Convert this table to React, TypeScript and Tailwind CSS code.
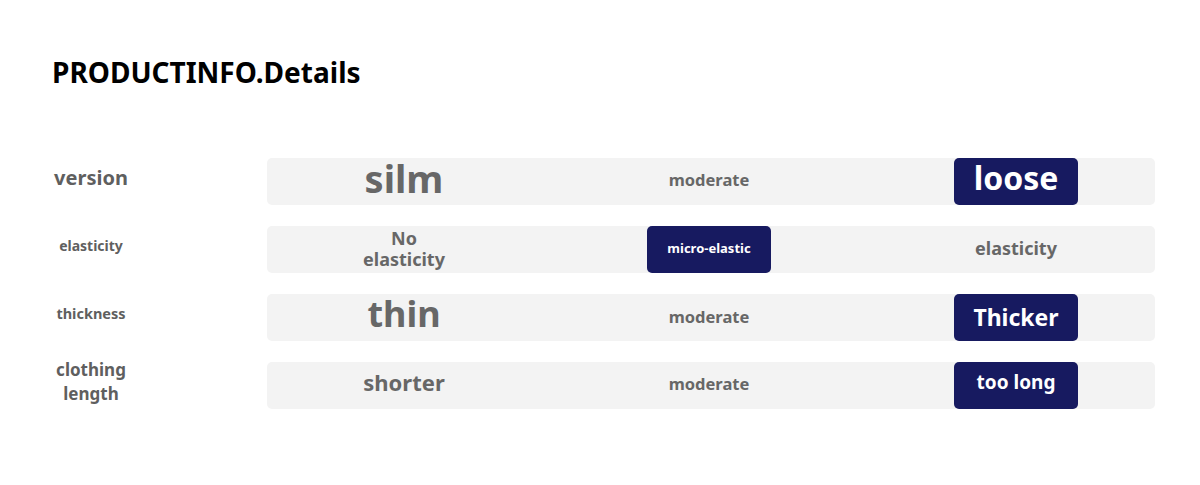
import React from "react";

type Cell = { text: React.ReactNode; cls: string; active?: boolean };
type Row = { label: React.ReactNode; labelCls: string; cells: [Cell, Cell, Cell] };

const rows: Row[] = [
  {
    label: "version",
    labelCls: "text-[20px]",
    cells: [
      { text: "silm", cls: "text-[38px] leading-none pb-[7px]" },
      { text: "moderate", cls: "text-[16.5px] pb-[2px]" },
      { text: "loose", cls: "text-[32px] leading-none pb-[7px]", active: true },
    ],
  },
  {
    label: "elasticity",
    labelCls: "text-[14px]",
    cells: [
      {
        text: (
          <>
            No
            <br />
            elasticity
          </>
        ),
        cls: "text-[18px] leading-[21px] pb-[2px]",
      },
      { text: "micro-elastic", cls: "text-[13px] pb-[2px]", active: true },
      { text: "elasticity", cls: "text-[18px] pb-[3px]" },
    ],
  },
  {
    label: "thickness",
    labelCls: "text-[14.5px]",
    cells: [
      { text: "thin", cls: "text-[36px] leading-none pb-[7px]" },
      { text: "moderate", cls: "text-[16.5px]" },
      { text: "Thicker", cls: "text-[23px] pb-[1px]", active: true },
    ],
  },
  {
    label: (
      <>
        clothing
        <br />
        length
      </>
    ),
    labelCls: "text-[17px] leading-[24px]",
    cells: [
      { text: "shorter", cls: "text-[22px] pb-[6px]" },
      { text: "moderate", cls: "text-[16.5px] pb-[2px]" },
      { text: "too long", cls: "text-[19px] pb-[6px]", active: true },
    ],
  },
];

function CellView({ c }: { c: Cell }) {
  if (c.active) {
    return (
      <div className="flex h-full items-center justify-center">
        <div className="flex h-full w-[124px] items-center justify-center rounded-[5px] bg-[#171a60]">
          <span className={`font-bold text-white ${c.cls}`}>{c.text}</span>
        </div>
      </div>
    );
  }
  return (
    <div className="flex h-full items-center justify-center">
      <span className={`text-center font-bold text-[#676767] ${c.cls}`}>{c.text}</span>
    </div>
  );
}

export default function App() {
  return (
    <div
      className="h-[485px] w-[1200px] bg-white pt-[54px]"
      style={{ fontFamily: '"Noto Sans", "Noto Sans CJK SC", sans-serif' }}
    >
      <div className="pl-[52px]">
        <h1 className="text-[28px] font-bold leading-[36px] text-black">PRODUCTINFO.Details</h1>
      </div>
      <div className="mt-[68px] flex flex-col gap-[21px] pl-[48px]">
        {rows.map((r, i) => (
          <div key={i} className="flex h-[47px] items-center">
            <div className="flex w-[219px] items-center pl-[2px]">
              <div
                className={`flex h-[46px] w-[82px] items-center justify-center pb-[8px] text-center font-bold text-[#5f5f5f] ${r.labelCls}`}
              >
                <span>{r.label}</span>
              </div>
            </div>
            <div className="grid h-[47px] w-[888px] grid-cols-[274px_336px_278px] rounded-[5px] bg-[#f3f3f3]">
              <CellView c={r.cells[0]} />
              <CellView c={r.cells[1]} />
              <CellView c={r.cells[2]} />
            </div>
          </div>
        ))}
      </div>
    </div>
  );
}
